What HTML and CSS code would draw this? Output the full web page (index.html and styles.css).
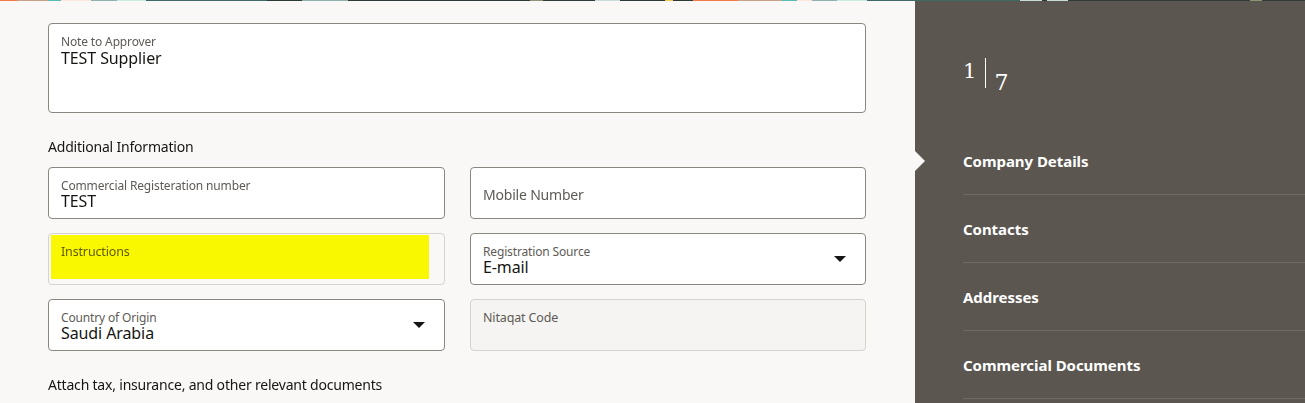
FILE: index.html
```html
<!DOCTYPE html>
<html>
<head>
<meta charset="utf-8">
<link rel="stylesheet" href="styles.css">
</head>
<body>
<div class="strip"></div>
<div class="page">
  <main class="main">
    <div class="field textarea">
      <div class="label">Note to Approver</div>
      <div class="value">TEST Supplier</div>
    </div>

    <h3 class="section">Additional Information</h3>

    <div class="grid">
      <div class="field">
        <div class="label">Commercial Registeration number</div>
        <div class="value">TEST</div>
      </div>
      <div class="field empty">
        <div class="placeholder">Mobile Number</div>
      </div>

      <div class="field readonly">
        <div class="label ro">Instructions</div>
        <div class="highlight"></div>
      </div>
      <div class="field select">
        <div class="sel-text">
          <div class="label">Registration Source</div>
          <div class="value">E-mail</div>
        </div>
        <span class="caret"></span>
      </div>

      <div class="field select">
        <div class="sel-text">
          <div class="label">Country of Origin</div>
          <div class="value">Saudi Arabia</div>
        </div>
        <span class="caret"></span>
      </div>
      <div class="field readonly grey">
        <div class="label ro">Nitaqat Code</div>
      </div>
    </div>

    <h3 class="section attach">Attach tax, insurance, and other relevant documents</h3>
  </main>

  <aside class="side">
    <div class="counter">
      <span class="num top">1</span>
      <span class="bar"></span>
      <span class="num bottom">7</span>
    </div>
    <nav class="nav">
      <div class="item active">Company Details</div>
      <div class="item">Contacts</div>
      <div class="item">Addresses</div>
      <div class="item">Commercial Documents</div>
    </nav>
  </aside>
</div>
</body>
</html>
```

FILE: styles.css
```css
* { box-sizing: border-box; }
html, body { margin: 0; padding: 0; }
body {
  width: 1305px;
  height: 403px;
  overflow: hidden;
  font-family: "Noto Sans", "Liberation Sans", sans-serif;
  background: #f9f8f6;
  color: #161513;
}
.strip {
  height: 1px;
  background: linear-gradient(to right,
    #f47b43 0 17px, #c9a089 17px 48px, #57bcb6 48px 61px, #fde6da 61px 91px,
    #8fb0ad 91px 117px, #c9ebe4 117px 146px, #3e6a66 146px 267px, #2a3a38 267px 302px,
    #8fb0ad 302px 348px, #2d3a38 348px 530px, #8d9478 530px 543px, #2f3b39 543px 595px,
    #c9dcd8 595px 620px, #2d3a38 620px 665px, #f1c94e 665px 673px, #2d3a38 673px 693px,
    #f47b43 693px 738px, #c9a089 738px 782px, #57bcb6 782px 797px, #fde6da 797px 812px,
    #8fb0ad 812px 837px, #c9ebe4 837px 867px, #3e6a66 867px 1020px, #c9dcd8 1020px 1042px,
    #2d3a38 1042px 1047px, #c9dcd8 1047px 1068px, #2f3b39 1068px 1250px, #8d9478 1250px 1262px,
    #2f3b39 1262px);
}
.page {
  display: flex;
  height: 402px;
}
.main {
  width: 915px;
  flex: none;
  padding: 22px 49px 0 48px;
}
.field {
  position: relative;
  background: #fff;
  border: 1px solid #8a8783;
  border-radius: 4px;
  height: 52px;
  padding: 11px 12px 0;
}
.field.textarea {
  height: 90px;
  padding-top: 10px;
}
.label {
  font-size: 12px;
  line-height: 13px;
  color: #5e5a55;
  letter-spacing: -0.15px;
}
.textarea .label { line-height: 15px; }
.value {
  font-size: 16px;
  line-height: 19px;
  color: #161513;
  letter-spacing: -0.1px;
}
.section {
  margin: 0;
  font-size: 14px;
  font-weight: 400;
  line-height: 17px;
  padding: 25px 0 12px;
  color: #161513;
  letter-spacing: -0.2px;
}
.grid {
  display: grid;
  grid-template-columns: 397px 396px;
  column-gap: 25px;
  row-gap: 14px;
}
.field.empty {
  display: flex;
  align-items: center;
  padding-top: 3px;
}
.placeholder {
  font-size: 14px;
  color: #5e5a55;
  letter-spacing: -0.2px;
}
.field.readonly {
  background: #f9f8f6;
  border-color: #d6d3cf;
  padding-top: 11px;
}
.field.readonly.grey {
  background: #f5f4f2;
}
.label.ro { font-size: 12.5px; }
.highlight {
  position: absolute;
  left: 2px;
  top: 1px;
  width: 378px;
  height: 44px;
  background: #ffff00;
  mix-blend-mode: multiply;
}
.field.select {
  display: flex;
  align-items: flex-start;
  justify-content: space-between;
  padding-right: 19px;
}
.caret {
  margin-top: 11px;
  width: 0;
  height: 0;
  border-left: 6px solid transparent;
  border-right: 6px solid transparent;
  border-top: 6px solid #161513;
}
.attach { padding-top: 25px; }

.side {
  flex: 1;
  background: #5b5650;
  padding: 56px 0 0 48px;
  position: relative;
}
.counter {
  display: flex;
  height: 37px;
  color: #fff;
  font-family: "DejaVu Serif", "Liberation Serif", serif;
  font-size: 21px;
}
.num { line-height: 1; }
.num.top { align-self: flex-start; margin-top: 4px; }
.num.bottom { align-self: flex-end; margin-bottom: 0; font-size: 22px; }
.bar {
  width: 1px;
  height: 30px;
  margin: 1px 8px 0 9px;
  background: #fff;
}
.nav {
  margin-top: 33px;
}
.item {
  position: relative;
  height: 68px;
  display: flex;
  align-items: center;
  color: #fff;
  font-weight: 700;
  font-size: 15px;
  letter-spacing: -0.05px;
  border-bottom: 1px solid #6f6a64;
}
.item.active::before {
  content: "";
  position: absolute;
  left: -48px;
  top: 24px;
  border-top: 10px solid transparent;
  border-bottom: 10px solid transparent;
  border-left: 10px solid #f9f8f6;
}
```
